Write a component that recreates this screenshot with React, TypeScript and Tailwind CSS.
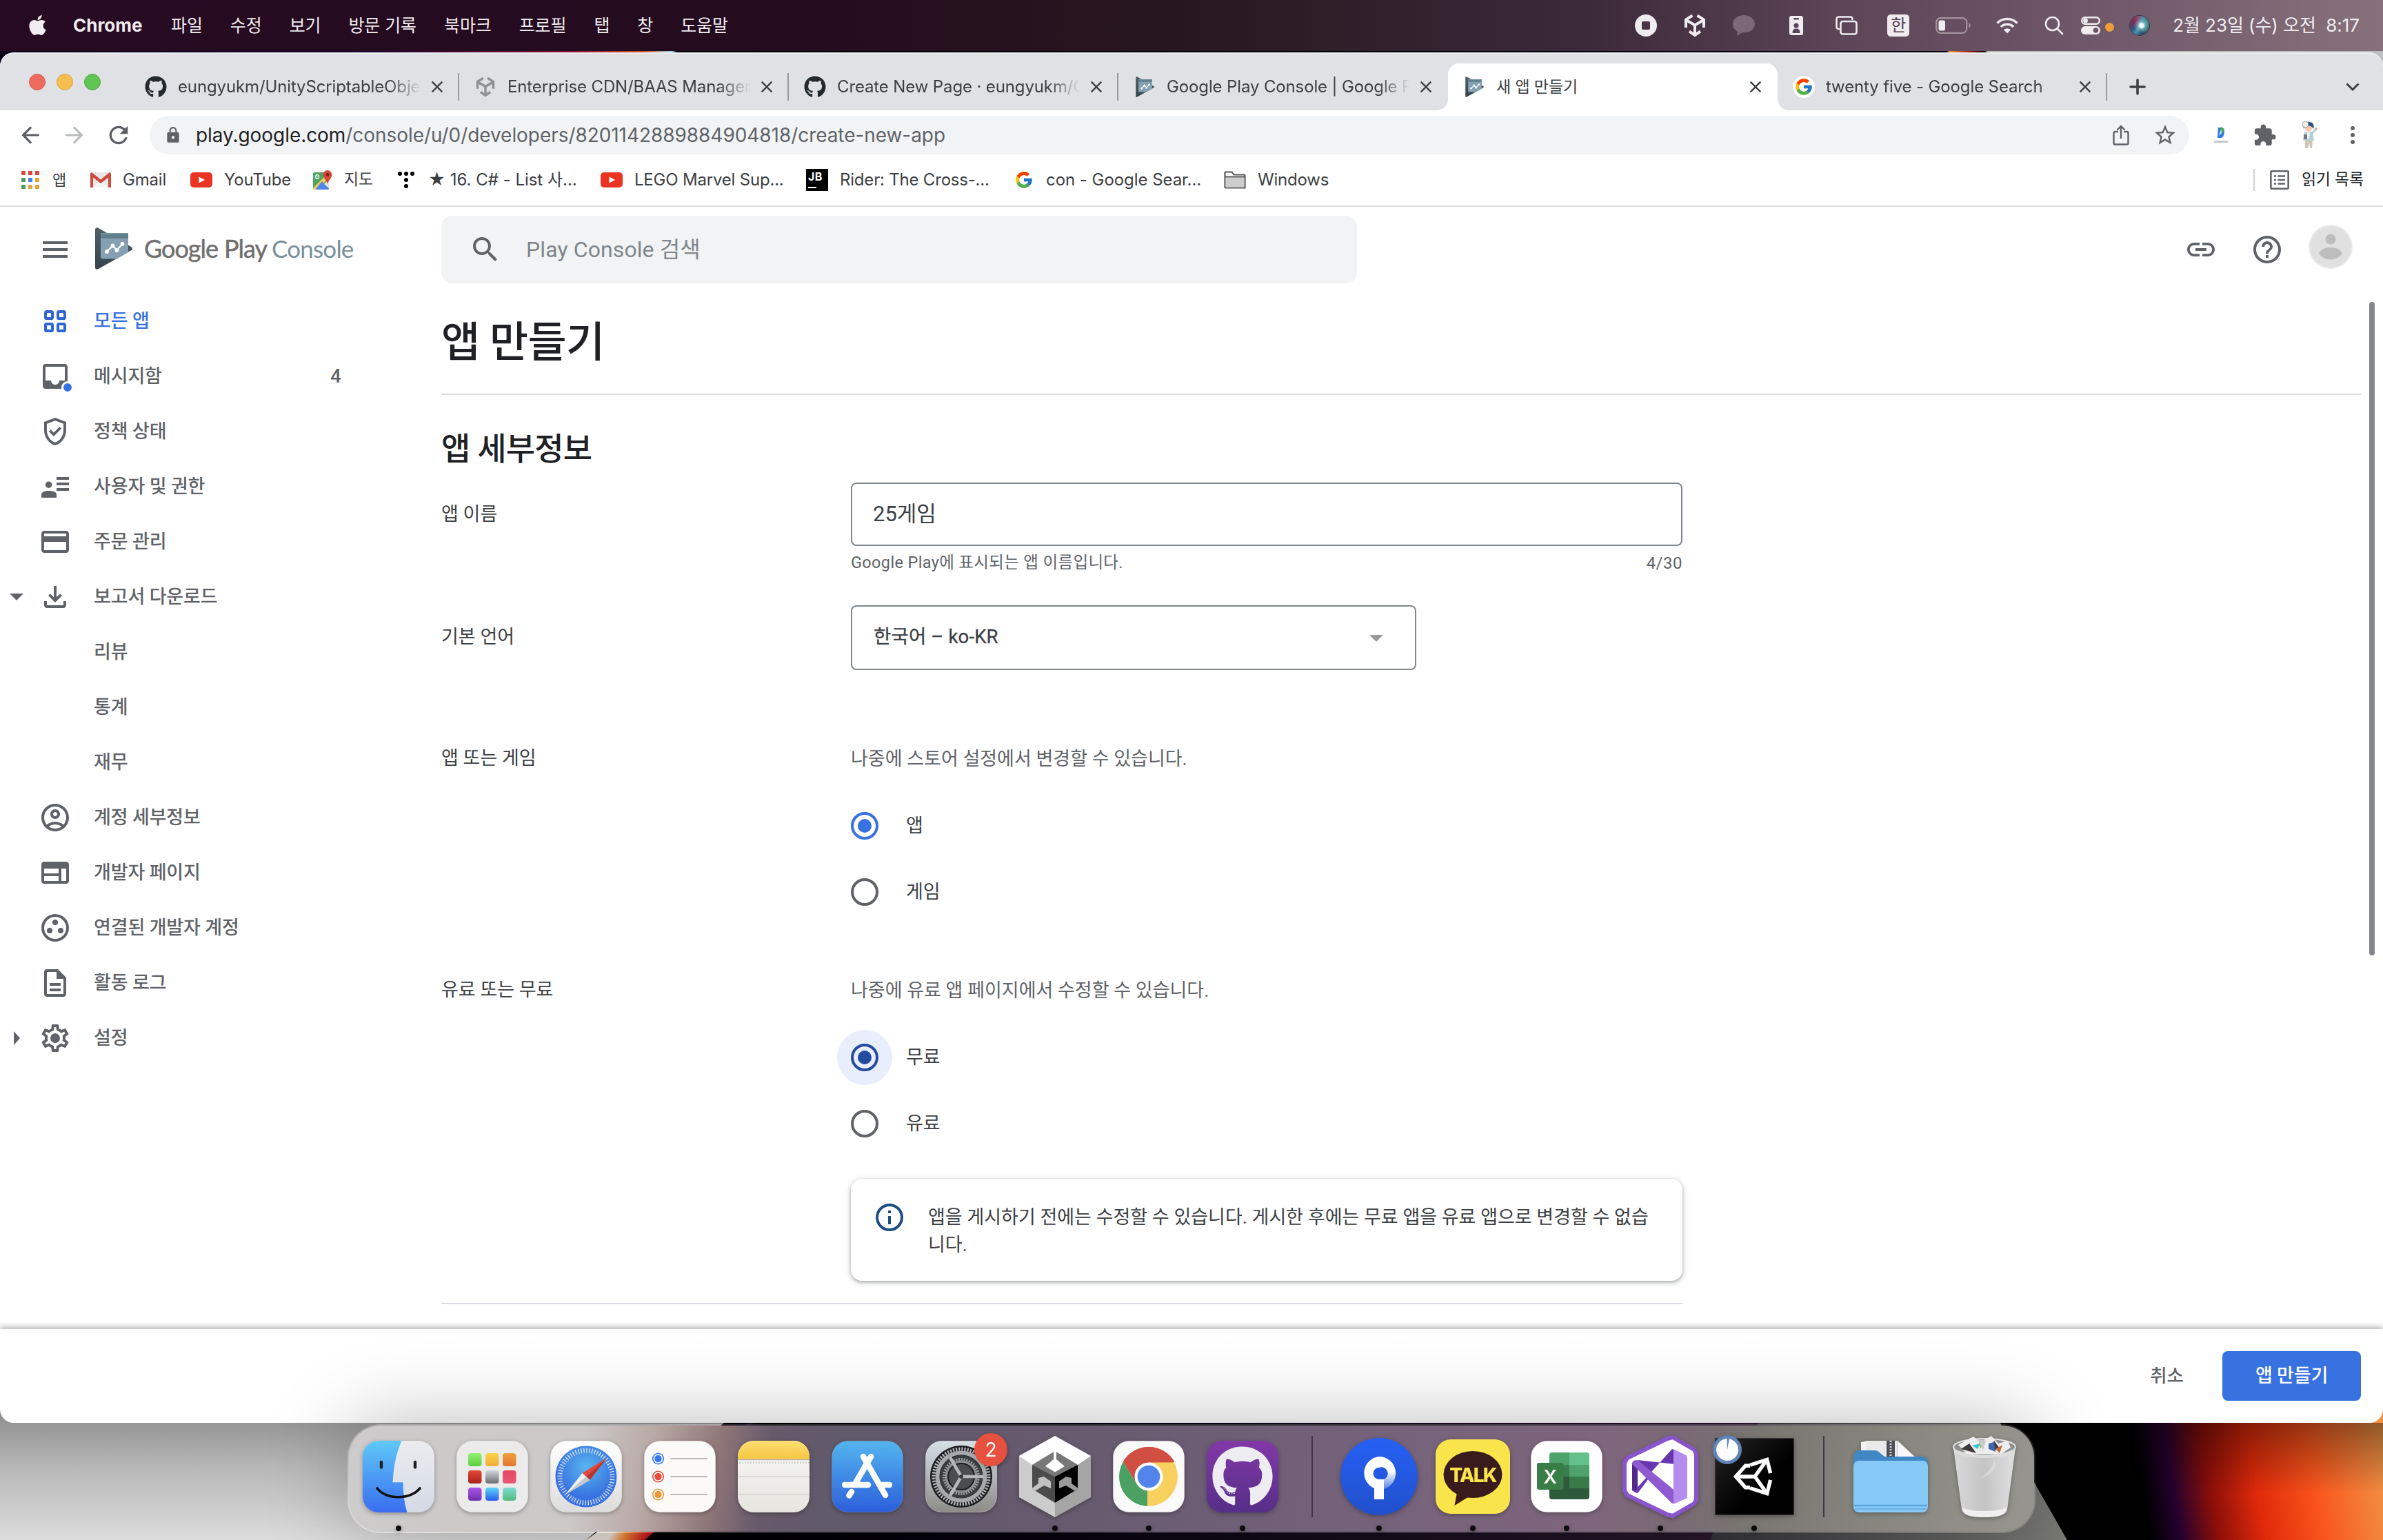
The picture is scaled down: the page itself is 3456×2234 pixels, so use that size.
import React from "react";
import { FaApple, FaGithub } from "react-icons/fa";
import { FcGoogle } from "react-icons/fc";
import {
  MdArrowBack,
  MdArrowForward,
  MdClose,
  MdExtension,
  MdHelpOutline,
  MdLink,
  MdLock,
  MdMenu,
  MdRefresh,
  MdSearch,
  MdStarBorder,
} from "react-icons/md";

type IconProps = { className?: string };

/* ---------- shared glyphs ---------- */

function ConsoleLogo({ className }: IconProps) {
  return (
    <svg viewBox="0 0 54 61" className={className}>
      <defs>
        <linearGradient id="pcTri" x1="0" y1="0" x2="0" y2="1">
          <stop offset="0" stopColor="#4f5f67" />
          <stop offset="1" stopColor="#36444c" />
        </linearGradient>
      </defs>
      <path d="M0 3C0 .5 2.500-.3 4.500.8L52.500 28.300C54.500 29.500 54.500 31.800 52.500 33L4.500 60.200C2.500 61.300 0 60.500 0 58Z" fill="url(#pcTri)" />
      <path d="M8 8H48V36L31.500 45.500H10C9 45.500 8 44.700 8 43.500Z" fill="#84a0b2" />
      <path d="M8 8H48V16H8Z" fill="#607f8c" />
      <path d="M8 8H48V9.500H8Z" fill="#7796a3" />
      <path d="M17 35L25.500 26.500L31.500 33L39.500 24" fill="none" stroke="#fff" strokeWidth="2.400" />
      <g fill="#fff">
        <circle cx="17" cy="35" r="2.900" />
        <circle cx="25.500" cy="26.500" r="2.900" />
        <circle cx="31.500" cy="33" r="2.900" />
        <circle cx="39.500" cy="24" r="2.900" />
      </g>
    </svg>
  );
}

function UnityMark({ className }: IconProps) {
  return (
    <svg viewBox="0 0 30 34" className={className} fill="none" stroke="currentColor" strokeWidth="4">
      <path d="M11.500 2.500L2 8.500V20M18.500 2.500L28 8.500V20" />
      <path d="M3 9.500L15 16.500L27 9.500M15 16.500V31" />
      <path d="M7 25.500L15 31L23 25.500" />
    </svg>
  );
}

function YouTubeIcon({ className }: IconProps) {
  return (
    <svg viewBox="0 0 32 22" className={className}>
      <rect width="32" height="22" rx="5" fill="#ea3323" />
      <path d="M12.500 6.500L21 11L12.500 15.500Z" fill="#fff" />
    </svg>
  );
}

/* ---------- macOS menu bar ---------- */

const menus = ["파일", "수정", "보기", "방문 기록", "북마크", "프로필", "탭", "창", "도움말"];

function MenuBar() {
  return (
    <div className="flex h-[74px] shrink-0 items-center bg-[linear-gradient(90deg,#260a22_0%,#240c1e_33%,#28171f_50%,#3d2a3a_67%,#5b4557_77%,#735d6c_90%,#86717b_100%)] text-[#f1edf0]">
      <FaApple className="ml-[38px] size-[33px] -translate-y-px" />
      <span className="ml-[35px] w-[102px] text-[26px] leading-none font-bold whitespace-nowrap">Chrome</span>
      <div className="ml-[40px] flex gap-[40px] text-[25px] leading-none tracking-[-0.1px] whitespace-nowrap">
        {menus.map((m) => (
          <span key={m}>{m}</span>
        ))}
      </div>
      <div className="ml-auto flex items-center pr-[34px]">
        <div className="flex size-8 items-center justify-center rounded-full bg-[#efebee]">
          <span className="size-3 rounded-[2px] bg-[#4a3547]" />
        </div>
        <UnityMark className="ml-10 h-[34px] w-[30px] text-[#efebee]" />
        <svg viewBox="0 0 32 32" className="ml-10 size-8">
          <path d="M16 1C7 1 0 6.500 0 14c0 5 3 8.500 7 10.500L6 31l8-5c10 1 18-4 18-12C32 6.500 25 1 16 1Z" fill="#7b6878" />
        </svg>
        <svg viewBox="0 0 20 28" className="ml-[50px] h-7 w-5">
          <rect width="20" height="28" rx="3" fill="#efebee" />
          <rect x="6" y="3" width="8" height="2.500" rx="1" fill="#58445a" />
          <circle cx="10" cy="14" r="3.500" fill="#58445a" />
          <path d="M4.500 25c0-5 2-6.500 5.500-6.500s5.500 1.500 5.500 6.500Z" fill="#58445a" />
        </svg>
        <svg viewBox="0 0 32 28" className="ml-[47px] h-7 w-8" fill="none" stroke="#efebee" strokeWidth="2.600">
          <path d="M6 19H4.500A3 3 0 0 1 1.500 16V4.500a3 3 0 0 1 3-3h17a3 3 0 0 1 3 3V6" />
          <rect x="7.500" y="8" width="23" height="18.500" rx="3" />
        </svg>
        <div className="ml-[43px] flex size-8 items-center justify-center rounded-[5px] bg-[#efebee] text-[24px] leading-none text-[#54404f]">한</div>
        <svg viewBox="0 0 52 24" className="ml-[38px] h-6 w-[52px]">
          <rect x="1.200" y="1.200" width="44" height="21.600" rx="6" fill="none" stroke="#a594a0" strokeWidth="2.200" />
          <rect x="4.500" y="4.500" width="9.500" height="15" rx="2.500" fill="#efebee" />
          <path d="M48.500 8v8c3-1.500 3-6.500 0-8Z" fill="#a594a0" />
        </svg>
        <svg viewBox="0 0 32 24" className="ml-9 h-6 w-8" fill="none" stroke="#efebee" strokeWidth="3.600">
          <path d="M1.500 8.500A20.500 20.500 0 0 1 30.500 8.500" />
          <path d="M6.800 14A13 13 0 0 1 25.200 14" />
          <path d="M11 18.300A7 7 0 0 1 21 18.300L16 23.500Z" fill="#efebee" stroke="none" />
        </svg>
        <svg viewBox="0 0 28 28" className="ml-[38px] size-7" fill="none" stroke="#efebee" strokeWidth="2.600">
          <circle cx="11.500" cy="11.500" r="9.500" />
          <path d="M18.500 18.500L26 26" strokeLinecap="round" />
        </svg>
        <svg viewBox="0 0 28 26" className="ml-[25px] h-[26px] w-7">
          <rect x="1.200" y="1.200" width="25.600" height="9.600" rx="4.800" fill="none" stroke="#efebee" strokeWidth="2.400" />
          <circle cx="6.500" cy="6" r="3.400" fill="#efebee" />
          <rect y="14" width="28" height="12" rx="6" fill="#efebee" />
          <circle cx="21.500" cy="20" r="3.800" fill="#6d5767" />
        </svg>
        <span className="mt-1 ml-[7px] size-[13px] rounded-full bg-[#ee9d3b]" />
        <div className="ml-[23px] size-7 rounded-full bg-[radial-gradient(circle_at_60%_50%,#f4fbfc_0_12%,rgba(120,190,200,0.7)_26%,transparent_52%),conic-gradient(from_20deg,#4d8f9c,#2f7a6a_20%,#2d4468_40%,#3f9ab0_52%,#36507c_62%,#7c2c55_78%,#a03060_88%,#4d8f9c)] ring-1 ring-[#3a3550]" />
        <span className="ml-[34px] text-[26px] leading-none tracking-[-0.050px] whitespace-nowrap">2월 23일 (수) 오전&nbsp; 8:17</span>
      </div>
    </div>
  );
}

/* ---------- Chrome window ---------- */

function GoogleBadge() {
  return (
    <span className="flex size-8 items-center justify-center rounded-full bg-white">
      <FcGoogle className="size-[28px]" />
    </span>
  );
}

type Tab = { title: string; icon: React.ReactNode; active?: boolean; sep?: boolean };

const tabs: Tab[] = [
  { title: "eungyukm/UnityScriptableObje", icon: <FaGithub className="size-8 text-[#24292e]" />, sep: true },
  { title: "Enterprise CDN/BAAS Manager", icon: <UnityMark className="h-[30px] w-7 text-[#909193]" />, sep: true },
  { title: "Create New Page · eungyukm/C", icon: <FaGithub className="size-8 text-[#24292e]" />, sep: true },
  { title: "Google Play Console | Google P", icon: <ConsoleLogo className="h-[30px] w-[27px]" /> },
  { title: "새 앱 만들기", icon: <ConsoleLogo className="h-[30px] w-[27px]" />, active: true },
  { title: "twenty five - Google Search", icon: <GoogleBadge />, sep: true },
];

function TabItem({ tab }: { tab: Tab }) {
  return (
    <div className={tab.active ? "relative flex h-[68px] w-[478px] shrink-0 items-center rounded-t-[16px] bg-white pl-[22px]" : "relative flex h-[68px] w-[478px] shrink-0 items-center pl-[22px]"}>
      {tab.active && (
        <>
          <span className="absolute bottom-0 -left-4 size-4 bg-[radial-gradient(circle_at_0_0,transparent_15.500px,white_16px)]" />
          <span className="absolute -right-4 bottom-0 size-4 bg-[radial-gradient(circle_at_100%_0,transparent_15.500px,white_16px)]" />
        </>
      )}
      <span className="flex size-8 shrink-0 items-center justify-center">{tab.icon}</span>
      <span
        className={
          tab.active
            ? "ml-4 w-[356px] shrink-0 text-[23px] leading-[36px] tracking-[-0.100px] whitespace-nowrap text-[#3c4043]"
            : "ml-4 w-[356px] shrink-0 [mask-image:linear-gradient(90deg,black_86%,transparent_99%)] text-[24px] leading-[36px] tracking-[-0.130px] whitespace-nowrap text-[#3c4043]"
        }
      >
        {tab.title}
      </span>
      <MdClose className="ml-[6px] size-7 shrink-0 text-[#3c4043]" />
      {tab.sep && <span className="absolute right-0 h-10 w-[2px] bg-[#97999e]" />}
    </div>
  );
}

function TabStrip() {
  return (
    <div className="flex h-[84px] shrink-0 rounded-t-[20px] border-t-2 border-[#eceef1] bg-[#dfe1e5] pt-[14px]">
      <div className="flex w-[188px] shrink-0 items-center gap-4 pb-[14px] pl-[42px]">
        <span className="size-6 rounded-full border border-[#d85a50] bg-[#ed6b5f]" />
        <span className="size-6 rounded-full border border-[#dca43c] bg-[#f5bf4f]" />
        <span className="size-6 rounded-full border border-[#51a73e] bg-[#61c554]" />
      </div>
      {tabs.map((t) => (
        <TabItem key={t.title} tab={t} />
      ))}
      <div className="flex flex-1 items-center justify-between pr-[34px] pl-[32px] text-[#3c4043]">
        <svg viewBox="0 0 24 24" className="size-6" stroke="currentColor" strokeWidth="3.600" strokeLinecap="round">
          <path d="M12 2V22M2 12H22" />
        </svg>
        <svg viewBox="0 0 20 12" className="h-3 w-5" fill="none" stroke="currentColor" strokeWidth="3">
          <path d="M1.500 1.500L10 10L18.500 1.500" />
        </svg>
      </div>
    </div>
  );
}

function MiniCharacter({ className }: IconProps) {
  return (
    <svg viewBox="0 0 24 42" className={className}>
      <path d="M6 28h11l-1 12h-3l-1-8-2 8H6Z" fill="#cfc6b3" />
      <path d="M5 16h12l2 13H3Z" fill="#b4cfdc" />
      <path d="M9 17h4l-1 9h-3Z" fill="#f4f4f4" />
      <path d="M17 18l5-6" stroke="#b9cfda" strokeWidth="3" />
      <circle cx="22" cy="12" r="1.800" fill="#e0a58e" />
      <circle cx="11" cy="11" r="5" fill="#f3c9b2" />
      <path d="M4 12C2 4 7 1 12 2c5 0 8 4 6 10-2-4-5-5-8-4-3 0-5 2-6 4Z" fill="#29527f" />
      <circle cx="6.500" cy="5.500" r="4.500" fill="#efece4" stroke="#8b8477" strokeWidth=".8" />
      <rect x="4" y="20" width="5" height="7" rx="1" fill="#6c7680" />
    </svg>
  );
}

function Toolbar() {
  return (
    <div className="flex h-[72px] shrink-0 items-center bg-white">
      <MdArrowBack className="ml-[25px] size-[38px] text-[#5b5f64]" />
      <MdArrowForward className="ml-[26px] size-[38px] text-[#babcbe]" />
      <MdRefresh className="ml-[25px] size-10 text-[#5b5f64]" />
      <div className="ml-[25px] flex h-14 w-[2958px] shrink-0 items-center rounded-full bg-[#f1f3f4]">
        <MdLock className="ml-[21px] size-[26px] text-[#5f6368]" />
        <span className="ml-[20px] text-[28px] leading-none tracking-[-0.060px] whitespace-nowrap text-[#5f6368]">
          <span className="text-[#202124]">play.google.com</span>/console/u/0/developers/8201142889884904818/create-new-app
        </span>
        <svg viewBox="0 0 24 30" className="ml-auto h-[30px] w-6" fill="none" stroke="#5f6368" strokeWidth="2.400">
          <path d="M8 10H3.500a2 2 0 0 0-2 2v14.500a2 2 0 0 0 2 2h17a2 2 0 0 0 2-2V12a2 2 0 0 0-2-2H16" />
          <path d="M12 20V3M6.500 7.500L12 2l5.500 5.500" />
        </svg>
        <MdStarBorder className="mr-[17px] ml-[34px] size-[36px] text-[#5f6368]" />
      </div>
      <svg viewBox="0 0 24 28" className="ml-[34px] h-7 w-6">
        <path d="M8 3h6c4 2 4 12-1 15H7Z" fill="#2f7de1" />
        <path d="M12 2l5 3-2 5-4-3Z" fill="#4fb04a" />
        <path d="M12 6l1 5-4 4Z" fill="#e6f0fb" />
        <rect x="2" y="22" width="20" height="3" fill="#c4c7cb" />
      </svg>
      <MdExtension className="ml-[34px] size-[35px] text-[#5f6368]" />
      <MiniCharacter className="ml-[35px] h-[42px] w-6" />
      <div className="ml-[48px] flex flex-col gap-1">
        <span className="size-[6px] rounded-full bg-[#5f6368]" />
        <span className="size-[6px] rounded-full bg-[#5f6368]" />
        <span className="size-[6px] rounded-full bg-[#5f6368]" />
      </div>
    </div>
  );
}

const appDots = ["#d8493e", "#d8493e", "#d8493e", "#4f9d5c", "#4a80e8", "#e3a53a", "#4f9d5c", "#e3a53a", "#e3a53a"];

function BookmarkBar() {
  return (
    <div className="flex h-[66px] shrink-0 items-center pb-[9px] text-[24px] leading-none tracking-[-0.200px] whitespace-nowrap text-[#3c4043]">
      <div className="ml-[31px] grid w-[26px] grid-cols-3 gap-x-[4px] gap-y-[4px]">
        {appDots.map((c, i) => (
          <span key={i} className="h-[6px] w-[6px]" style={{ backgroundColor: c }} />
        ))}
      </div>
      <span className="ml-[19px] w-[22px] text-[22px]">앱</span>
      <svg viewBox="0 0 30 22" className="ml-[33px] h-[22px] w-[30px]">
        <rect width="30" height="22" rx="1.500" fill="#e6e6e6" />
        <path d="M4 22L15 11L26 22Z" fill="#f6f6f6" />
        <path d="M0 1.500V22H4V7.500L15 16L26 7.500V22H30V1.500L28 0L15 10.500L2 0Z" fill="#cf4b3d" />
      </svg>
      <span className="ml-[17px] w-[64px]">Gmail</span>
      <YouTubeIcon className="ml-[34px] h-[22px] w-8" />
      <span className="ml-[17px] w-[95px]">YouTube</span>
      <svg viewBox="0 0 28 28" className="ml-[34px] size-7">
        <rect y="3" width="23" height="25" rx="2" fill="#4fa35f" />
        <path d="M0 26L22 4V12L6 28H2Z" fill="#f5cf55" />
        <path d="M3 28L13 16L23 28Z" fill="#4f84ea" />
        <path d="M16 20L23 13V26Z" fill="#e2e2e2" />
        <text x="2.500" y="13" fontSize="9" fontWeight="700" fill="#fff">G</text>
        <path d="M21 0a6.500 6.500 0 0 0-6.500 6.500C14.500 11 19.500 14 21 20c1.500-6 6.500-9 6.500-13.500A6.500 6.500 0 0 0 21 0Z" fill="#d5483b" />
        <circle cx="21" cy="6.500" r="2.400" fill="#7d241c" />
      </svg>
      <span className="ml-[17px] w-[45px] text-[23px]">지도</span>
      <svg viewBox="0 0 24 24" className="ml-[33px] size-6 text-black" fill="currentColor">
        <circle cx="3" cy="3" r="3" />
        <circle cx="12" cy="3" r="3" />
        <circle cx="21" cy="3" r="3" />
        <circle cx="12" cy="12" r="3" />
        <circle cx="12" cy="21" r="3" />
      </svg>
      <span className="ml-[20px] w-[216px] tracking-[-0.020px]">★ 16. C# - List 사...</span>
      <YouTubeIcon className="ml-[34px] h-[22px] w-8" />
      <span className="ml-[17px] w-[216px]">LEGO Marvel Sup...</span>
      <div className="ml-[33px] flex h-8 w-8 flex-col bg-black pt-[3px] pl-[3px] text-[16px] leading-[16px] font-bold tracking-[0.500px] text-white">
        JB
        <span className="mt-[7px] h-[2px] w-3 bg-white" />
      </div>
      <span className="ml-[17px] w-[217px]">Rider: The Cross-...</span>
      <FcGoogle className="ml-[36px] size-[28px]" />
      <span className="ml-[18px] w-[225px] tracking-[-0.050px]">con - Google Sear...</span>
      <svg viewBox="0 0 32 26" className="ml-[33px] h-[26px] w-8">
        <path d="M1.500 24V2.500a1 1 0 0 1 1-1h9l3 4H29.500a1 1 0 0 1 1 1V24.500H2.500Z" fill="#fff" stroke="#58595b" strokeWidth="2.200" />
        <path d="M2.500 9.500H29.500V23.500H2.500Z" fill="#cdcdcd" />
        <path d="M2 8.500H30" stroke="#58595b" strokeWidth="2" />
      </svg>
      <span className="ml-[17px]">Windows</span>
      <span className="ml-auto h-8 w-[2px] bg-[#cfd1d4]" />
      <svg viewBox="0 0 28 28" className="ml-[22px] size-7" fill="none" stroke="#5f6368" strokeWidth="2.600">
        <rect x="1.300" y="1.300" width="25.400" height="25.400" rx="1.500" />
        <path d="M6 8.500H9M6 14H9M6 19.500H9M11.500 8.500H22M11.500 14H22M11.500 19.500H22" />
      </svg>
      <span className="mr-[28px] ml-[18px] text-[23px] text-[#202124]">읽기 목록</span>
    </div>
  );
}

/* ---------- Play Console page ---------- */

const navPaths = {
  inbox: "M19 3H5c-1.100 0-2 .9-2 2v14c0 1.100.9 2 2 2h14c1.100 0 2-.9 2-2V5c0-1.100-.9-2-2-2zm0 12h-4c0 1.660-1.350 3-3 3s-3-1.340-3-3H5V5h14v10z",
  shield:
    "M12 2L4 5v6.090c0 5.050 3.410 9.760 8 10.910 4.590-1.150 8-5.860 8-10.910V5l-8-3zm6 9.090c0 4-2.550 7.700-6 8.830-3.450-1.130-6-4.820-6-8.830v-4.700l6-2.250 6 2.250v4.700zm-9.180-.5L7.400 12l3.540 3.540 5.660-5.660-1.410-1.410-4.240 4.240-2.130-2.120z",
  users: "M13 5h9v2h-9zM13 9h9v2h-9zM13 13h9v2h-9zM7.300 8.200a2.400 2.400 0 1 1 0 4.800 2.400 2.400 0 0 1 0-4.800zM2 20v-2.200C2 15.700 4.500 15 7.500 15S13 15.700 13 17.800V20z",
  card: "M20 4H4c-1.110 0-1.990.89-1.990 2L2 18c0 1.110.89 2 2 2h16c1.110 0 2-.89 2-2V6c0-1.110-.89-2-2-2zm0 14H4v-6h16v6zm0-10H4V6h16v2z",
  download: "M18 15v3H6v-3H4v3c0 1.100.9 2 2 2h12c1.100 0 2-.9 2-2v-3h-2zM17 11l-1.410-1.410L13 12.170V4h-2v8.170L8.410 9.590 7 11l5 5 5-5z",
  account:
    "M12 2C6.480 2 2 6.480 2 12s4.480 10 10 10 10-4.480 10-10S17.520 2 12 2zM7.350 18.500C8.660 17.560 10.260 17 12 17s3.340.56 4.650 1.500c-1.310.94-2.910 1.500-4.650 1.500s-3.340-.56-4.650-1.500zm10.790-1.380C16.450 15.800 14.320 15 12 15s-4.450.8-6.140 2.120C4.700 15.730 4 13.950 4 12c0-4.420 3.580-8 8-8s8 3.580 8 8c0 1.950-.7 3.730-1.860 5.120zM12 6c-1.930 0-3.500 1.570-3.500 3.500S10.070 13 12 13s3.500-1.570 3.500-3.500S13.930 6 12 6zm0 5c-.83 0-1.500-.67-1.500-1.500S11.170 8 12 8s1.500.67 1.500 1.500S12.830 11 12 11z",
  web: "M20 4H4c-1.100 0-1.990.9-1.990 2L2 18c0 1.100.9 2 2 2h16c1.100 0 2-.9 2-2V6c0-1.100-.9-2-2-2zm-5.500 14H4v-3.500h10.500V18zm0-5.500H4V9h10.500v3.500zM20 18h-3.500V9H20v9z",
  group:
    "M12 2a10 10 0 1 0 0 20 10 10 0 0 0 0-20zm0 18a8 8 0 1 1 0-16 8 8 0 0 1 0 16zM12 6a2 2 0 1 1 0 4 2 2 0 0 1 0-4zM8 12a2 2 0 1 1 0 4 2 2 0 0 1 0-4zM16 12a2 2 0 1 1 0 4 2 2 0 0 1 0-4z",
  doc: "M8 16h8v2H8zm0-4h8v2H8zm6-10H6c-1.100 0-2 .9-2 2v16c0 1.100.89 2 1.990 2H18c1.100 0 2-.9 2-2V8l-6-6zm4 18H6V4h7v5h5v11z",
  gear: "M19.430 12.980c.04-.32.07-.64.07-.98 0-.34-.03-.66-.07-.98l2.110-1.650c.19-.15.24-.42.12-.64l-2-3.460c-.09-.16-.26-.25-.44-.25-.06 0-.12.010-.17.030l-2.490 1c-.52-.4-1.080-.73-1.690-.98l-.38-2.650C14.460 2.180 14.250 2 14 2h-4c-.25 0-.46.18-.49.42l-.38 2.650c-.61.25-1.170.59-1.690.98l-2.490-1c-.06-.020-.12-.030-.18-.030-.17 0-.34.090-.43.25l-2 3.460c-.13.22-.07.49.12.64l2.110 1.650c-.04.32-.07.65-.07.98 0 .33.030.66.070.98l-2.110 1.650c-.19.15-.24.42-.12.64l2 3.460c.09.16.26.25.44.25.06 0 .12-.010.17-.030l2.490-1c.52.4 1.080.73 1.690.98l.38 2.650c.03.24.24.42.49.42h4c.25 0 .46-.18.49-.42l.38-2.650c.61-.25 1.170-.59 1.690-.98l2.490 1c.06.020.12.030.18.030.17 0 .34-.090.43-.25l2-3.460c.12-.22.07-.49-.12-.64l-2.110-1.650zm-1.980-1.710c.04.31.05.52.05.73 0 .21-.020.43-.050.73l-.14 1.130.89.7 1.080.84-.7 1.210-1.270-.51-1.040-.42-.9.68c-.43.32-.84.56-1.250.73l-1.060.43-.16 1.130-.2 1.350h-1.400l-.19-1.350-.16-1.130-1.060-.43c-.43-.18-.83-.41-1.230-.71l-.91-.7-1.060.43-1.270.51-.7-1.210 1.080-.84.89-.7-.14-1.130c-.030-.31-.050-.54-.050-.74s.020-.43.050-.73l.14-1.130-.89-.7-1.080-.84.7-1.210 1.270.51 1.040.42.9-.68c.43-.32.84-.56 1.250-.73l1.060-.43.16-1.130.2-1.350h1.390l.19 1.350.16 1.130 1.060.43c.43.18.83.41 1.230.71l.91.7 1.060-.43 1.270-.51.7 1.210-1.070.85-.89.7.14 1.130zM12 8.500a3.500 3.500 0 1 0 0 7 3.500 3.500 0 0 0 0-7z",
};

type NavItem = { label: string; path?: string; grid?: boolean; dot?: boolean; count?: string; arrow?: "down" | "right" };

const navItems: NavItem[] = [
  { label: "모든 앱", grid: true },
  { label: "메시지함", path: navPaths.inbox, dot: true, count: "4" },
  { label: "정책 상태", path: navPaths.shield },
  { label: "사용자 및 권한", path: navPaths.users },
  { label: "주문 관리", path: navPaths.card },
  { label: "보고서 다운로드", path: navPaths.download, arrow: "down" },
  { label: "리뷰" },
  { label: "통계" },
  { label: "재무" },
  { label: "계정 세부정보", path: navPaths.account },
  { label: "개발자 페이지", path: navPaths.web },
  { label: "연결된 개발자 계정", path: navPaths.group },
  { label: "활동 로그", path: navPaths.doc },
  { label: "설정", path: navPaths.gear, arrow: "right" },
];

function NavRow({ item }: { item: NavItem }) {
  return (
    <div className="flex h-20 items-center text-[#5f6368]">
      <div className="flex w-14 justify-center">
        {item.arrow === "down" && <span className="mr-[8px] border-x-[10px] border-t-[10px] border-x-transparent border-t-[#5f6368]" />}
        {item.arrow === "right" && <span className="mr-[7px] border-y-[10px] border-l-[9px] border-y-transparent border-l-[#5f6368]" />}
      </div>
      <div className="relative size-12">
        {item.grid && (
          <svg viewBox="0 0 24 24" className="size-12" fill="none" stroke="#2f66d3" strokeWidth="2">
            <rect x="5" y="5" width="5" height="5" rx=".8" />
            <rect x="14" y="5" width="5" height="5" rx=".8" />
            <rect x="5" y="14" width="5" height="5" rx=".8" />
            <rect x="14" y="14" width="5" height="5" rx=".8" />
          </svg>
        )}
        {item.path && (
          <svg viewBox="0 0 24 24" className="size-12" fill="currentColor" fillRule="evenodd">
            <path d={item.path} />
          </svg>
        )}
        {item.dot && <span className="absolute top-[31px] left-[33px] size-[18px] rounded-full border-[3px] border-white bg-[#3871e0]" />}
      </div>
      <span className={item.grid ? "mt-px ml-8 w-[343px] text-[27px] leading-none font-medium tracking-[-0.150px] whitespace-nowrap text-[#3871e0]" : "mt-px ml-8 w-[343px] text-[27px] leading-none font-medium tracking-[-0.150px] whitespace-nowrap"}>
        {item.label}
      </span>
      {item.count && <span className="text-[28px] leading-none font-medium">{item.count}</span>}
    </div>
  );
}

function Sidebar() {
  return (
    <div className="w-[640px] shrink-0">
      <div className="flex h-[128px] items-center">
        <MdMenu className="ml-14 size-12 text-[#5f6368]" />
        <ConsoleLogo className="-mt-[3px] ml-[34px] h-[61px] w-[54px]" />
        <div className="-mt-1 ml-[17px] flex items-baseline font-[Lato,sans-serif] text-[36px] leading-none tracking-[-1px] whitespace-nowrap">
          <span className="w-[116px] text-[#707070] [-webkit-text-stroke:0.5px_#707070]">Google</span>
          <span className="w-[69px] text-[#707070] [-webkit-text-stroke:0.5px_#707070]">Play</span>
          <span className="text-[35px] tracking-[-0.800px] text-[#78909c]">Console</span>
        </div>
      </div>
      {navItems.map((n) => (
        <NavRow key={n.label} item={n} />
      ))}
    </div>
  );
}

function Radio({ label, checked, focused }: { label: string; checked?: boolean; focused?: boolean }) {
  const ring = focused ? "border-[#254ba0]" : checked ? "border-[#3871e0]" : "border-[#5f6368]";
  const dot = focused ? "bg-[#254ba0]" : "bg-[#3871e0]";
  return (
    <div className="flex h-24 items-center">
      <span className={focused ? "-mx-5 flex size-20 items-center justify-center rounded-full bg-[#e8eefc]" : "flex size-10 items-center justify-center"}>
        <span className={`flex size-10 items-center justify-center rounded-full border-4 ${ring}`}>
          {checked && <span className={`size-5 rounded-full ${dot}`} />}
        </span>
      </span>
      <span className="ml-10 text-[27px] leading-none tracking-[-0.200px] text-[#3c4043]">{label}</span>
    </div>
  );
}

function CreateForm() {
  return (
    <div className="text-[27px] leading-none tracking-[0px] text-[#3c4043]">
      <div className="flex h-[147px] items-center border-b-2 border-[#dadce0] pb-[2px]">
        <h1 className="text-[61px] leading-none font-medium tracking-[-0.600px] text-[#202124]">앱 만들기</h1>
      </div>
      <div className="flex h-[127px] items-center pt-[28px]">
        <h2 className="text-[46px] leading-none font-medium tracking-[-0.800px] text-[#202124]">앱 세부정보</h2>
      </div>

      <div className="grid grid-cols-[594px_1206px]">
        <div className="flex h-[92px] items-center">앱 이름</div>
        <div>
          <div className="flex h-[92px] items-center rounded-lg border-2 border-[#80868b] pb-[2px] pl-[30px] text-[31px]">25게임</div>
          <div className="flex h-[50px] items-center justify-between text-[24px] text-[#5f6368]">
            <span className="text-[23.500px] tracking-[0.350px]">Google Play에 표시되는 앱 이름입니다.</span>
            <span className="tracking-[0.500px]">4/30</span>
          </div>
        </div>
      </div>

      <div className="mt-[36px] grid grid-cols-[594px_1206px]">
        <div className="flex h-[92px] items-center">기본 언어</div>
        <div className="flex h-[94px] w-[820px] items-center justify-between rounded-lg border-2 border-[#80868b] pr-[46px] pb-[2px] pl-[31px]">
          <span className="text-[27.500px] tracking-[0.150px] [-webkit-text-stroke:0.3px_#3c4043]">한국어 – ko-KR</span>
          <span className="mt-[3px] border-x-[10px] border-t-[10px] border-x-transparent border-t-[#999]" />
        </div>
      </div>

      <div className="mt-[105px] grid grid-cols-[594px_1206px]">
        <div className="flex h-[46px] items-center">앱 또는 게임</div>
        <div>
          <div className="mb-[24px] flex h-[49px] items-center text-[#5f6368]">나중에 스토어 설정에서 변경할 수 있습니다.</div>
          <Radio label="앱" checked />
          <Radio label="게임" />
        </div>
      </div>

      <div className="mt-[71px] grid grid-cols-[594px_1206px]">
        <div className="flex h-[46px] items-center">유료 또는 무료</div>
        <div>
          <div className="mb-[24px] flex h-[49px] items-center text-[#5f6368]">나중에 유료 앱 페이지에서 수정할 수 있습니다.</div>
          <Radio label="무료" checked focused />
          <Radio label="유료" />
          <div className="mt-8 flex h-[148px] rounded-2xl bg-white px-9 pt-9 shadow-[0_2px_4px_rgba(60,64,67,0.350),0_2px_8px_2px_rgba(60,64,67,0.150)]">
            <svg viewBox="0 0 40 40" className="size-10 shrink-0">
              <circle cx="20" cy="20" r="18" fill="none" stroke="#1b4f80" strokeWidth="4" />
              <path d="M18 10h4v4h-4zM18 18h4v12h-4z" fill="#1b4f80" />
            </svg>
            <p className="ml-9 w-[1070px] shrink-0 leading-10 break-all">
              앱을 게시하기 전에는 수정할 수 있습니다. 게시한 후에는 무료 앱을 유료 앱으로 변경할 수 없습
              <br />
              니다.
            </p>
          </div>
        </div>
      </div>
      <div className="mt-8 h-[2px] w-[1800px] bg-[#dadce4]" />
    </div>
  );
}

function Page() {
  return (
    <div className="flex h-[1630px] shrink-0 border-t-2 border-[#dcddde] bg-white">
      <div className="-mt-0.5 flex w-full">
        <Sidebar />
        <div className="w-[2784px] shrink-0">
          <div className="flex h-[128px] items-start pt-[15px]">
            <div className="flex h-[98px] w-[1328px] items-center rounded-2xl bg-[#f1f3f4] pl-[40px]">
              <MdSearch className="size-12 text-[#5f6368]" />
              <span className="ml-[35px] text-[32px] leading-none tracking-[0.100px] text-[#80868b]">Play Console 검색</span>
            </div>
            <MdLink className="mt-[25px] ml-auto size-12 text-[#5f6368]" />
            <MdHelpOutline className="mt-[25px] ml-12 size-12 text-[#5f6368]" />
            <svg viewBox="0 0 64 64" className="mt-[13px] mr-[12px] ml-9 size-16">
              <circle cx="32" cy="32" r="32" fill="#ececec" />
              <circle cx="32" cy="32" r="30" fill="#e0e0e0" />
              <circle cx="32" cy="21" r="7.500" fill="#bdbdbd" />
              <path d="M15 41.500c3-6 9-8.500 17-8.500s14 2.500 17 8.500C45 47.500 39 50.500 32 50.500S19 47.500 15 41.500Z" fill="#bdbdbd" />
            </svg>
          </div>
          <CreateForm />
        </div>
        <div className="mt-[140px] ml-[12px] h-[948px] w-2 rounded-full bg-[#80868b]" />
      </div>
    </div>
  );
}

function Footer() {
  return (
    <div className="mx-0 flex h-[136px] shrink-0 items-center justify-end rounded-b-[20px] bg-white pr-8 shadow-[0_-3px_9px_rgba(0,0,0,0.300)]">
      <span className="mr-[56px] text-[26.500px] leading-none font-medium tracking-[0px] text-[#5f6368]">취소</span>
      <div className="flex h-[72px] w-[201px] items-center justify-center rounded-lg bg-[#3872e0] text-[27px] leading-none font-medium tracking-[-0.200px] text-white">앱 만들기</div>
    </div>
  );
}

/* ---------- Dock ---------- */

function Squircle({ fill, stroke }: { fill: string; stroke?: string }) {
  return <rect x=".5" y=".5" width="103" height="103" rx="23" fill={fill} stroke={stroke ?? "rgba(255,255,255,.4)"} />;
}

function Finder() {
  return (
    <svg viewBox="0 0 104 104" className="size-[104px]">
      <defs>
        <linearGradient id="fdL" x1="0" y1="0" x2="0" y2="1"><stop offset="0" stopColor="#5fc9f8" /><stop offset="1" stopColor="#3a6df0" /></linearGradient>
        <linearGradient id="fdR" x1="0" y1="0" x2="0" y2="1"><stop offset="0" stopColor="#ececef" /><stop offset="1" stopColor="#d3dae6" /></linearGradient>
        <clipPath id="fdC"><rect width="104" height="104" rx="23" /></clipPath>
      </defs>
      <g clipPath="url(#fdC)">
        <rect width="104" height="104" fill="url(#fdR)" />
        <path d="M0 0H57C49 18 45 38 44 60H59C59 76 61 92 65 104H0Z" fill="url(#fdL)" />
        <path d="M57 0C49 18 45 38 44 60H59C59 76 61 92 65 104" fill="none" stroke="#fff" strokeOpacity=".5" strokeWidth="1.200" />
      </g>
      <path d="M27 31V38.500M76 31V38.500" stroke="#222" strokeWidth="4.500" strokeLinecap="round" />
      <path d="M21 69C34 86 69 86 83 69" fill="none" stroke="#111" strokeWidth="3.600" strokeLinecap="round" />
    </svg>
  );
}

const launchColors = [
  ["#93f172", "#5fce3e"], ["#f8d649", "#f0ab38"], ["#eea33c", "#e2762f"],
  ["#e2483a", "#ab2117"], ["#cfd6da", "#6a6d70"], ["#e54763", "#e85a78"],
  ["#ab56e6", "#6f2fb0"], ["#5bd5fa", "#2a5df0"], ["#7bdbcf", "#55bb80"],
];

function Launchpad() {
  return (
    <svg viewBox="0 0 104 104" className="size-[104px]">
      <Squircle fill="#ebebeb" />
      {launchColors.map(([a, b], i) => (
        <g key={a}>
          <defs>
            <linearGradient id={`lp${i}`} x1="0" y1="0" x2="0" y2="1"><stop offset="0" stopColor={a} /><stop offset="1" stopColor={b} /></linearGradient>
          </defs>
          <rect x={17 + (i % 3) * 25} y={18 + Math.floor(i / 3) * 25} width="19.500" height="19" rx="4" fill={`url(#lp${i})`} />
        </g>
      ))}
    </svg>
  );
}

function Safari() {
  return (
    <svg viewBox="0 0 104 104" className="size-[104px]">
      <defs>
        <linearGradient id="sfB" x1="0" y1="0" x2="0" y2="1"><stop offset="0" stopColor="#fff" /><stop offset="1" stopColor="#dcdcdc" /></linearGradient>
        <radialGradient id="sfC" cy=".35"><stop offset="0" stopColor="#58b6ee" /><stop offset="1" stopColor="#3871e0" /></radialGradient>
      </defs>
      <Squircle fill="url(#sfB)" />
      <circle cx="52" cy="52" r="44.500" fill="url(#sfC)" />
      <circle cx="52" cy="52" r="38" fill="none" stroke="#fff" strokeWidth="7" strokeDasharray="1.200 2.780" opacity=".9" />
      <path d="M82 25L57.500 57L46.500 47Z" fill="#e5483d" />
      <path d="M82 25L52 52L57.500 57Z" fill="#b9352d" />
      <path d="M22 78L46.500 47L57.500 57Z" fill="#f3f3f3" />
      <path d="M22 78L52 52L57.500 57Z" fill="#c4c8cc" />
    </svg>
  );
}

function Reminders() {
  return (
    <svg viewBox="0 0 104 104" className="size-[104px]">
      <Squircle fill="#fbfaf8" />
      {["#3478f6", "#ea4b3d", "#eb9a37"].map((c, i) => (
        <g key={c}>
          <circle cx="20.500" cy={26 + i * 26} r="7.800" fill="none" stroke={c} strokeWidth="1.600" />
          <circle cx="20.500" cy={26 + i * 26} r="5.200" fill={c} />
          <path d={`M38.500 ${26 + i * 26}H92`} stroke="#b9b9bb" strokeWidth="2" />
        </g>
      ))}
    </svg>
  );
}

function Notes() {
  return (
    <svg viewBox="0 0 104 104" className="size-[104px]">
      <defs>
        <clipPath id="ntC"><rect width="104" height="104" rx="23" /></clipPath>
        <linearGradient id="ntY" x1="0" y1="0" x2="0" y2="1"><stop offset="0" stopColor="#fbdf71" /><stop offset="1" stopColor="#f6c643" /></linearGradient>
        <linearGradient id="ntW" x1="0" y1="0" x2="0" y2="1"><stop offset="0" stopColor="#f7f7f5" /><stop offset="1" stopColor="#e6e5e0" /></linearGradient>
      </defs>
      <g clipPath="url(#ntC)">
        <rect width="104" height="104" fill="url(#ntW)" />
        <rect width="104" height="26.500" fill="url(#ntY)" />
        <path d="M0 27.500H104" stroke="#b3ab97" strokeWidth="1.600" />
        <path d="M2 32H104" stroke="#b9b9b6" strokeWidth="1.600" strokeDasharray="1.600 2.400" />
        <path d="M0 52H104M0 78H104" stroke="#d4d3d0" strokeWidth="1.600" />
      </g>
    </svg>
  );
}

function AppStore() {
  return (
    <svg viewBox="0 0 104 104" className="size-[104px]">
      <defs>
        <linearGradient id="asB" x1="0" y1="0" x2="0" y2="1"><stop offset="0" stopColor="#54b5ef" /><stop offset="1" stopColor="#2c5fdb" /></linearGradient>
      </defs>
      <Squircle fill="url(#asB)" stroke="rgba(255,255,255,.15)" />
      <g stroke="#fff" strokeWidth="8.500" strokeLinecap="round">
        <path d="M57 23L35 61M46 23L78 79M19 64H53M70 64H84M29 74L25.500 79.500" />
      </g>
    </svg>
  );
}

function SystemPreferences() {
  return (
    <div className="relative size-[104px]">
      <svg viewBox="0 0 104 104" className="size-[104px]">
        <defs>
          <linearGradient id="spB" x1="0" y1="0" x2="0" y2="1"><stop offset="0" stopColor="#d5e0e6" /><stop offset="1" stopColor="#8d8c88" /></linearGradient>
        </defs>
        <Squircle fill="url(#spB)" />
        <circle cx="52" cy="52" r="45" fill="#1d1e20" />
        <circle cx="52" cy="52" r="40" fill="none" stroke="#b4b8bb" strokeWidth="5" strokeDasharray="2.200 1.990" />
        <circle cx="52" cy="52" r="34.500" fill="none" stroke="#a6aaad" strokeWidth="6" />
        <circle cx="52" cy="52" r="31" fill="#3a3c3f" />
        <circle cx="52" cy="52" r="25" fill="none" stroke="#9ea2a4" strokeWidth="4" strokeDasharray="2 1.770" />
        <circle cx="52" cy="52" r="21.500" fill="none" stroke="#8b8f91" strokeWidth="4" />
        <circle cx="52" cy="52" r="19" fill="#4a4c4e" stroke="#1d1e20" strokeWidth="2" />
        <path d="M52 52H84M52 52L36 24.500M52 52L36 79.500" stroke="#b4b8bb" strokeWidth="4.500" />
        <circle cx="52" cy="52" r="3" fill="#35373a" />
      </svg>
      <span className="absolute -top-[11px] left-[71px] flex size-12 items-center justify-center rounded-full bg-[#e8503f] text-[28px] leading-none text-white shadow-md">2</span>
    </div>
  );
}

function UnityHub() {
  return (
    <svg viewBox="0 0 104 118" className="h-[118px] w-[104px]">
      <path d="M52 0L104 29V89L52 118Z" fill="#a5a5a5" />
      <path d="M52 0L0 29V89L52 118Z" fill="#cccccc" />
      <path d="M52 0L104 29L85 42L52 22L19 42L0 29Z" fill="#fff" />
      <path d="M52 22L85 42L52 59L19 42Z" fill="#787878" />
      <path d="M19 42L52 59V97L19 77Z" fill="#4b4b4b" />
      <path d="M85 42L52 59V97L85 77Z" fill="#000" />
      <path d="M50 22H54V34L66 44L52 52.500L38 44L50 34Z" fill="#fff" />
      <path d="M36 59L46 66V76L36 72L23 80L19 77V75.500L28 69V61Z" fill="#c2c2c2" />
      <path d="M68 59L58 66V76L68 72L81 80L85 77V75.500L76 69V61Z" fill="#9b9b9b" />
    </svg>
  );
}

function ChromeIcon() {
  return (
    <svg viewBox="0 0 104 104" className="size-[104px]">
      <Squircle fill="#fafafa" />
      <path d="M52 52L14.800 30.500A43 43 0 0 1 89.200 30.500Z" fill="#d04e42" />
      <path d="M52 9A43 43 0 0 1 89.200 30.500L52 31.500L34 62L14.800 30.500A43 43 0 0 1 52 9Z" fill="#d04e42" />
      <path d="M14.800 30.500L34.100 62.200L52 72.500L50 95A43 43 0 0 1 14.800 30.500Z" fill="#4ba162" />
      <path d="M89.200 32.500A43 43 0 0 1 50 95L69.900 62.300L68 40L52 31.500H88.500Z" fill="#f8d05e" />
      <path d="M69.900 62.300L50 95L50 70Z" fill="#f8d05e" />
      <circle cx="52" cy="52" r="20.500" fill="#fff" />
      <circle cx="52" cy="52" r="16.300" fill="#5285ec" />
    </svg>
  );
}

function GithubDesktop() {
  return (
    <div className="flex size-[104px] items-center justify-center rounded-[23px] bg-gradient-to-b from-[#8338a8] to-[#562e88]">
      <FaGithub className="size-[90px] text-[#ececf1]" />
    </div>
  );
}

function Sourcetree() {
  return (
    <svg viewBox="0 0 112 112" className="size-[112px]">
      <defs>
        <linearGradient id="stB" x1="0" y1="0" x2="0" y2="1"><stop offset="0" stopColor="#2660f4" /><stop offset="1" stopColor="#2050cc" /></linearGradient>
        <linearGradient id="stR" x1="0" y1="0" x2="0" y2="1"><stop offset=".45" stopColor="#fff" /><stop offset="1" stopColor="#fff" stopOpacity=".25" /></linearGradient>
      </defs>
      <circle cx="56" cy="56" r="56" fill="url(#stB)" />
      <path d="M56 27A24 24 0 0 1 63 74V60A9 9 0 0 0 56 43Z" fill="url(#stR)" />
      <path d="M56 27A24 24 0 0 0 49 73V89H63V60H56A8.500 8.500 0 0 1 56 43Z" fill="#fff" />
    </svg>
  );
}

function Kakao() {
  return (
    <svg viewBox="0 0 108 108" className="size-[108px]">
      <rect width="108" height="108" rx="22" fill="#f9e44c" />
      <ellipse cx="54" cy="51" rx="42.500" ry="34" fill="#391b1b" />
      <path d="M32 72L27.500 96L50 82Z" fill="#391b1b" />
      <text x="54" y="61.500" textAnchor="middle" fontSize="28" fontWeight="800" letterSpacing="-1.800" fill="#f9e44c">TALK</text>
    </svg>
  );
}

function Excel() {
  return (
    <svg viewBox="0 0 104 104" className="size-[104px]">
      <Squircle fill="#fff" />
      <path d="M31 17H56V36H27V21A4 4 0 0 1 31 17Z" fill="#4fa26c" />
      <path d="M56 17H81A4 4 0 0 1 85 21V36H56Z" fill="#65c18c" />
      <path d="M27 35H56V52H27Z" fill="#397d50" />
      <path d="M56 35H85V52H56Z" fill="#4fa26c" />
      <path d="M27 52H56V69H27Z" fill="#2d5a3c" />
      <path d="M56 52H85V69H56Z" fill="#387b48" />
      <path d="M27 69H85V81A4 4 0 0 1 81 85H31A4 4 0 0 1 27 81Z" fill="#2d5a3a" />
      <rect x="9" y="32" width="38.500" height="39" rx="3" fill="#387d45" />
      <text x="28.300" y="61.500" textAnchor="middle" fontSize="27" fontWeight="600" fill="#fff">X</text>
    </svg>
  );
}

function VisualStudio() {
  return (
    <svg viewBox="0 0 110 120" className="h-[120px] w-[110px]">
      <path d="M73 3L104 21L107 27V93L104 99L73 117L65 115L7 87L3 80V40L7 33L65 5Z" fill="#fff" stroke="#8a55cc" strokeWidth="6" strokeLinejoin="round" />
      <path d="M14 40L22 36V84L14 80Z" fill="#52268c" />
      <path d="M22 36L26 40L40 60L26 79L22 84L16 82L72 20L76 22V42Z" fill="#6a36b0" />
      <path d="M14 42C14 36 20 35 24 38L76 80V98L72 99Z" fill="#8f5ad0" />
      <path d="M74 20L92 29Q94 30 94 33V88Q94 91 92 92L74 100Z" fill="#b48bee" />
      <path d="M22 50L31 60L22 71Z" fill="#fff" />
      <path d="M74 42V79L54 60Z" fill="#fff" />
    </svg>
  );
}

function UnityEditor() {
  return (
    <div className="relative flex h-[112px] w-[115px] items-center justify-center border border-[#3a3a3a] bg-[linear-gradient(135deg,#262626,#000_60%)]">
      <svg viewBox="0 0 115 112" className="h-[112px] w-[115px]" fill="none" stroke="#fff" strokeWidth="5.500">
        <path d="M45 39L30 56L45 73M43 40L51 40M43 72L51 72" />
        <path d="M51 39L76 31L81 51M51 73L76 81L81 61" />
        <path d="M58 56H29M58 56L76 31M58 56L76 81" />
      </svg>
      <svg viewBox="0 0 42 42" className="absolute -top-[5px] -left-[4px] size-[42px]">
        <circle cx="21" cy="21" r="18.500" fill="#fdfdfe" stroke="#6184b8" strokeWidth="5" />
        <path d="M21 21L20.500 5L24 5Z" fill="#6184b8" />
      </svg>
    </div>
  );
}

function DownloadsFolder() {
  return (
    <svg viewBox="0 0 108 112" className="h-[112px] w-[108px]">
      <path d="M11 6L22 4V40H11Z" fill="#f3f3f3" />
      <path d="M18 4H64L94 34V44H18Z" fill="#e9e9ea" />
      <path d="M48 4H60V32H48Z" fill="#4b5157" />
      <path d="M54 4V30" stroke="#d3d6d9" strokeWidth="3" strokeDasharray="2 2" />
      <path d="M64 4L94 32H64Z" fill="#f8f8f8" stroke="#c9c9c9" />
      <path d="M0 30C0 22 3 18 9 18H30C35 18 37 20 40 23L45 27H98C105 27 108 30 108 36V60H0Z" fill="#4187c4" />
      <rect y="33" width="108" height="75" rx="8" fill="#86c9f6" />
      <path d="M1 98H107" stroke="#5da6dc" strokeWidth="2.500" />
      <path d="M2 103H106" stroke="#68b1e6" strokeWidth="2" />
    </svg>
  );
}

function Trash() {
  return (
    <svg viewBox="0 0 92 120" className="h-[120px] w-[92px]">
      <defs>
        <linearGradient id="trB" x1="0" y1="0" x2="1" y2="0"><stop offset="0" stopColor="#d9d9da" /><stop offset=".5" stopColor="#c4c4c5" /><stop offset="1" stopColor="#e0e0e1" /></linearGradient>
      </defs>
      <path d="M1 18L13 108C15 116 26 119 46 119S77 116 79 108L91 18Z" fill="url(#trB)" />
      <path d="M14 104C20 112 72 112 78 104L77 110C74 117 60 119 46 119S17 117 15 110Z" fill="#efeff1" />
      <ellipse cx="46" cy="17" rx="45" ry="12" fill="#8f8f90" stroke="#e6e6e6" strokeWidth="2" />
      <path d="M8 14L22 6L30 2L40 10L56 1L66 12L80 8L84 18L70 27H20Z" fill="#ededed" />
      <path d="M12 20L24 12L34 26ZM60 8L70 22L54 20Z" fill="#3f3a3a" />
      <path d="M28 15L40 12L36 20Z" fill="#39c2d8" />
      <path d="M38 11L46 13L40 19Z" fill="#6cc644" />
      <path d="M52 12L60 10L62 24L52 20Z" fill="#3f66ad" />
      <path d="M62 20L72 14L68 26Z" fill="#c96a35" />
      <path d="M36 6L44 22L48 8Z" fill="#c9c9c9" />
      <path d="M1 18C10 32 82 32 91 18L90 24C80 36 12 36 2 24Z" fill="#dcdcdd" />
      <path d="M60 36C66 44 58 58 40 62C52 54 58 46 60 36Z" fill="#d9d9da" />
    </svg>
  );
}

function DockCell({ children, running }: { children: React.ReactNode; running?: boolean }) {
  return (
    <div className="relative flex h-[148px] w-[136px] items-center justify-center drop-shadow-[0_2px_3px_rgba(0,0,0,0.300)]">
      {children}
      {running && <span className="absolute -bottom-[5px] h-2 w-2 rounded-full bg-[#0a0a0a]" />}
    </div>
  );
}

function DockDivider() {
  return (
    <div className="flex h-[148px] w-[62px] items-center justify-center pl-[3px]">
      <span className="h-[118px] w-[2px] bg-[#40364a]" />
    </div>
  );
}

function Dock() {
  return (
    <div className="relative mx-auto mt-[2px] flex h-[158px] w-[2448px] shrink-0 rounded-[48px] border-2 border-white/15 bg-[linear-gradient(100deg,#cdcbcb_0%,#cbc8c7_14%,#b9a9a6_18%,#8f7678_22%,#66596a_25%,#605a6b_29%,#665a6e_42%,#73617a_58%,#7e667c_74%,#7a6a74_79%,#777670_83%,#87867f_91%,#96958f_100%)] bg-clip-padding pl-[4px] shadow-[0_0_120px_rgba(0,0,0,0.280)]">
      <DockCell running><Finder /></DockCell>
      <DockCell><Launchpad /></DockCell>
      <DockCell><Safari /></DockCell>
      <DockCell><Reminders /></DockCell>
      <DockCell><Notes /></DockCell>
      <DockCell><AppStore /></DockCell>
      <DockCell><SystemPreferences /></DockCell>
      <DockCell running><UnityHub /></DockCell>
      <DockCell running><ChromeIcon /></DockCell>
      <DockCell running><GithubDesktop /></DockCell>
      <DockDivider />
      <DockCell running><Sourcetree /></DockCell>
      <DockCell running><Kakao /></DockCell>
      <DockCell running><Excel /></DockCell>
      <DockCell running><VisualStudio /></DockCell>
      <DockCell running><UnityEditor /></DockCell>
      <DockDivider />
      <DockCell><DownloadsFolder /></DockCell>
      <DockCell><Trash /></DockCell>
    </div>
  );
}

function Wallpaper() {
  return (
    <svg viewBox="0 0 3456 2234" className="absolute inset-0 h-[2234px] w-[3456px]">
      <defs>
        <linearGradient id="wpGrey" x1="0" y1="0" x2="0" y2="1"><stop offset="0" stopColor="#858585" /><stop offset=".5" stopColor="#b9b9b9" /><stop offset="1" stopColor="#dcdcdc" /></linearGradient>
        <linearGradient id="wpEdge" gradientUnits="userSpaceOnUse" x1="955" y1="2120" x2="1035" y2="2172"><stop offset="0" stopColor="#e8e0d8" /><stop offset=".18" stopColor="#f08a3a" /><stop offset=".45" stopColor="#c81f1a" /><stop offset=".75" stopColor="#2a0830" /><stop offset="1" stopColor="#000" /></linearGradient>
        <linearGradient id="wpDark" x1="0" y1="0" x2="1" y2="0"><stop offset="0" stopColor="#000" /><stop offset=".3" stopColor="#06030f" /><stop offset=".6" stopColor="#1d1122" /><stop offset=".8" stopColor="#2c1a30" /><stop offset="1" stopColor="#3a3a38" /></linearGradient>
        <linearGradient id="wpRGrey" x1="0" y1="0" x2="1" y2="0"><stop offset="0" stopColor="#34343a" /><stop offset="1" stopColor="#7b7b76" /></linearGradient>
        <linearGradient id="wpFire" gradientUnits="userSpaceOnUse" x1="3110" y1="2180" x2="3470" y2="2120"><stop offset="0" stopColor="#000" /><stop offset=".12" stopColor="#24012e" /><stop offset=".27" stopColor="#8e0f08" /><stop offset=".45" stopColor="#e02a0a" /><stop offset=".68" stopColor="#f9551c" /><stop offset="1" stopColor="#f0994a" /></linearGradient>
        <linearGradient id="wpShade" x1="0" y1="0" x2="0" y2="1"><stop offset="0" stopColor="#000" stopOpacity=".4" /><stop offset=".6" stopColor="#000" stopOpacity="0" /></linearGradient>
        <linearGradient id="wpTop" x1="0" y1="0" x2="1" y2="0"><stop offset="0" stopColor="#0a0018" /><stop offset=".16" stopColor="#1c0032" /><stop offset=".24" stopColor="#8b1535" /><stop offset=".27" stopColor="#d8502a" /><stop offset=".282" stopColor="#9be0e8" /><stop offset=".284" stopColor="#000" /><stop offset=".817" stopColor="#0b0010" /><stop offset=".818" stopColor="#f0a030" /><stop offset=".826" stopColor="#b01f10" /><stop offset=".833" stopColor="#000" /><stop offset=".834" stopColor="#bdbdbd" /><stop offset="1" stopColor="#bdbdbd" /></linearGradient>
      </defs>
      <rect width="3456" height="2234" fill="#000" />
      <rect y="70" width="3456" height="40" fill="url(#wpTop)" />
      <rect x="860" y="2040" width="2150" height="194" fill="url(#wpDark)" />
      <path d="M0 2030H1090L850 2234H0Z" fill="url(#wpGrey)" />
      <path d="M1113 2044L850 2234H935L1160 2044Z" fill="url(#wpEdge)" />
      <path d="M2560 2040H2890L2998 2234H2480Z" fill="url(#wpRGrey)" />
      <path d="M2887 2040L2998 2234H3130V2040Z" fill="#000" />
      <rect x="3080" y="2020" width="376" height="214" fill="url(#wpFire)" />
      <rect x="3080" y="2064" width="376" height="170" fill="url(#wpShade)" />
    </svg>
  );
}

export default function App() {
  return (
    <div className="relative h-[2234px] w-[3456px] overflow-hidden bg-black font-[Inter,'Noto_Sans_CJK_KR',sans-serif]">
      <Wallpaper />
      <div className="relative flex h-full flex-col">
        <MenuBar />
        <div className="mt-[2px] flex h-[1988px] shrink-0 flex-col overflow-hidden rounded-[20px] bg-white">
          <TabStrip />
          <Toolbar />
          <BookmarkBar />
          <div className="flex flex-col font-[Roboto,'Noto_Sans_CJK_KR',sans-serif]">
            <Page />
            <Footer />
          </div>
        </div>
        <Dock />
      </div>
    </div>
  );
}
